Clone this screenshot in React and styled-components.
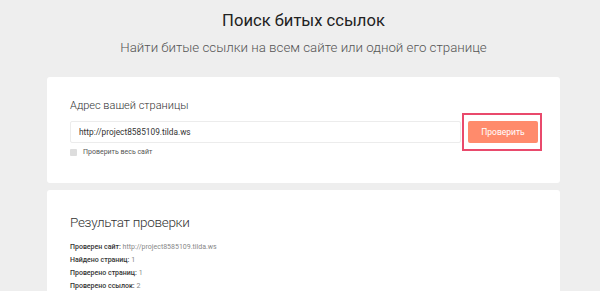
import styled, { createGlobalStyle } from "styled-components";

const GlobalStyle = createGlobalStyle`
  html, body {
    margin: 0;
    padding: 0;
    background: #eeeeee;
    font-family: Roboto, "Liberation Sans", sans-serif;
    color: #222;
  }
`;

const Page = styled.div`
  box-sizing: border-box;
  width: 600px;
  height: 291px;
  padding-left: 7px;
  overflow: hidden;
  display: flex;
  flex-direction: column;
  align-items: center;
`;

const Title = styled.h1`
  margin: 10px 0 0;
  font-size: 16.6px;
  font-weight: 400;
  line-height: 22px;
  color: #222;
`;

const Subtitle = styled.p`
  margin: 8px 0 0;
  font-size: 13.3px;
  font-weight: 300;
  line-height: 16px;
  color: #555;
`;

const Card = styled.section`
  box-sizing: border-box;
  width: 513px;
  margin-top: ${(p) => p.$gap}px;
  height: ${(p) => p.$height}px;
  background: #fff;
  border-radius: 3px;
  padding: ${(p) => p.$pad};
  flex-shrink: 0;
`;

const Label = styled.div`
  font-size: 11px;
  font-weight: 300;
  color: #333;
  line-height: 16px;
`;

const FormRow = styled.div`
  display: flex;
  align-items: center;
  gap: 1px;
  margin-top: 7px;
`;

const Input = styled.input`
  box-sizing: border-box;
  flex-shrink: 0;
  width: 391px;
  height: 22px;
  border: 1px solid #ececec;
  border-radius: 2px;
  padding: 0 8px;
  font-family: inherit;
  font-size: 8.3px;
  color: #333;
  outline: none;
`;

const Highlight = styled.div`
  display: flex;
  flex-shrink: 0;
  padding: 6px 2px 6px 4px;
  border: 2px solid #e94a6c;
  margin: -8px 0;
`;

const Button = styled.button`
  width: 70px;
  height: 22px;
  border: none;
  border-radius: 2px;
  background: #ff8b6c;
  color: #fff;
  font-family: inherit;
  font-size: 8.5px;
  cursor: pointer;
`;

const CheckRow = styled.label`
  display: flex;
  align-items: center;
  gap: 6px;
  margin-top: 5px;
  font-size: 7px;
  color: #555;
`;

const Box = styled.span`
  width: 7px;
  height: 7px;
  border-radius: 1px;
  background: #ddd;
`;

const ResultTitle = styled.h2`
  margin: 0 0 9px;
  font-size: 13.5px;
  font-weight: 300;
  letter-spacing: -0.3px;
  line-height: 20px;
  color: #333;
`;

const Line = styled.div`
  font-size: 7px;
  line-height: 13px;
  color: #333;
  font-weight: 500;
`;

const Value = styled.span`
  font-weight: 400;
  color: #888;
`;

const results = [
  ["Проверен сайт:", "http://project8585109.tilda.ws"],
  ["Найдено страниц:", "1"],
  ["Проверено страниц:", "1"],
  ["Проверено ссылок:", "2"],
];

export default function App() {
  return (
    <>
      <GlobalStyle />
      <Page>
        <Title>Поиск битых ссылок</Title>
        <Subtitle>Найти битые ссылки на всем сайте или одной его странице</Subtitle>
        <Card $gap={21} $height={106} $pad="21px 18px 21px 23px">
          <Label>Адрес вашей страницы</Label>
          <FormRow>
            <Input defaultValue="http://project8585109.tilda.ws" />
            <Highlight>
              <Button>Проверить</Button>
            </Highlight>
          </FormRow>
          <CheckRow>
            <Box />
            Проверить весь сайт
          </CheckRow>
        </Card>
        <Card $gap={7} $height={120} $pad="22px 23px">
          <ResultTitle>Результат проверки</ResultTitle>
          {results.map(([k, v]) => (
            <Line key={k}>
              {k} <Value>{v}</Value>
            </Line>
          ))}
        </Card>
      </Page>
    </>
  );
}
